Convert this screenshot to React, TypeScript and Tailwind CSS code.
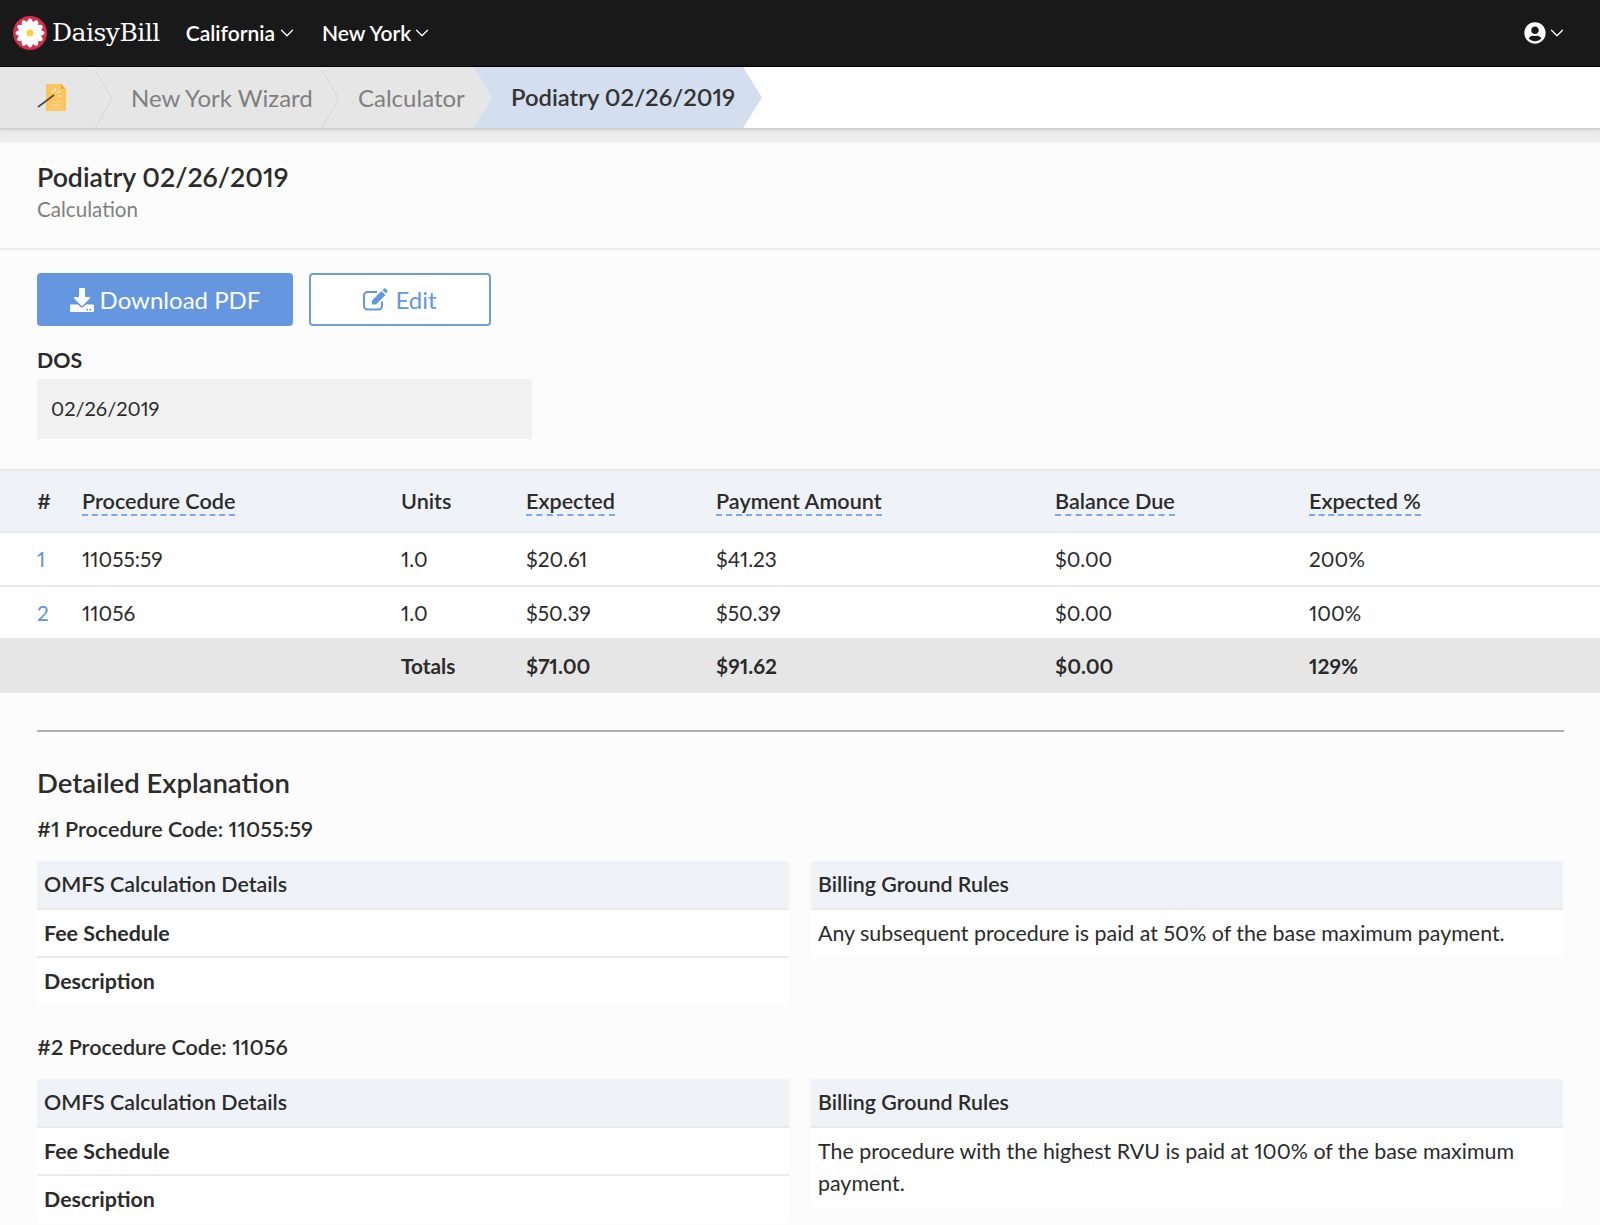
import { ChevronDown } from 'lucide-react'
import { FaDownload, FaUserCircle } from 'react-icons/fa'

const colClass = 'grid grid-cols-[45px_319px_125px_190px_339px_254px_1fr] items-center pl-[37px]'

const columns = [
  { label: '#', tip: false },
  { label: 'Procedure Code', tip: true },
  { label: 'Units', tip: false },
  { label: 'Expected', tip: true },
  { label: 'Payment Amount', tip: true },
  { label: 'Balance Due', tip: true },
  { label: 'Expected %', tip: true },
]

const rows = [
  ['1', '11055:59', '1.0', '$20.61', '$41.23', '$0.00', '200%'],
  ['2', '11056', '1.0', '$50.39', '$50.39', '$0.00', '100%'],
]

const totals = ['', '', 'Totals', '$71.00', '$91.62', '$0.00', '129%']

function DaisyLogo() {
  const petals = Array.from({ length: 12 }, (_, i) => i * 30)
  return (
    <svg width="34" height="34" viewBox="0 0 34 34" className="shrink-0">
      <circle cx="17" cy="17" r="17" fill="#d32f4f" />
      {petals.map((deg) => (
        <ellipse key={deg} cx="17" cy="9" rx="3.3" ry="6.5" fill="#fff" transform={`rotate(${deg} 17 17)`} />
      ))}
      <circle cx="17" cy="17" r="3.4" fill="#f7d23e" />
    </svg>
  )
}

function WizardIcon() {
  return (
    <svg width="34" height="30" viewBox="0 0 34 30">
      <path d="M11 6h19v21H11z" fill="#fce3a8" transform="rotate(6 20 16)" />
      <path d="M9 1h15l5 5v22H9z" fill="#fbc65f" />
      <path d="M24 1l5 5h-5z" fill="#e7ab42" />
      <path d="M15 22h9M15 25h9M15 19h9" stroke="#f3dca6" strokeWidth="0.8" />
      <path d="M1 24L17 12" stroke="#4b4b4b" strokeWidth="1.6" />
      <path d="M18 5v3M23 8l-3 2M24 13h-3M15 7l1 2" stroke="#fff" strokeWidth="1" />
    </svg>
  )
}

function EditIcon() {
  return (
    <svg width="25" height="24" viewBox="0 0 25 24" className="shrink-0" fill="none">
      <path d="M19 13.5V18a3.5 3.5 0 0 1-3.5 3.5h-11A3.5 3.5 0 0 1 1 18V7.5A3.5 3.5 0 0 1 4.500 4H14" stroke="currentColor" strokeWidth="2" />
      <path d="M9 12.500L18.500 3l4 4L13 16.500H9z" fill="currentColor" />
      <path d="M19.500 2L21 .5a1 1 0 0 1 1.400 0l2 2a1 1 0 0 1 0 1.400L23 5.500z" fill="currentColor" />
    </svg>
  )
}

function CrumbChevron() {
  return (
    <svg width="19" height="58" viewBox="0 0 19 58" className="absolute left-full top-[3px]" fill="none">
      <path d="M1 0l17 29L1 58" stroke="#d4d4d4" strokeWidth="1" />
    </svg>
  )
}

function TopNav() {
  return (
    <header className="flex h-[67px] items-center border-b border-black bg-[#191919] pl-[13px] pr-[32px] text-white">
      <DaisyLogo />
      <span className="ml-[5px] font-['DejaVu_Serif',serif] text-[25px] tracking-[-0.5px]">DaisyBill</span>
      <nav className="ml-[26px] flex items-center gap-[24px] text-[21px] font-semibold">
        <span className="flex items-center gap-[1px]">
          California <ChevronDown className="size-[22px]" strokeWidth={1.4} />
        </span>
        <span className="flex items-center">
          New York <ChevronDown className="size-[22px]" strokeWidth={1.4} />
        </span>
      </nav>
      <div className="ml-auto flex items-center">
        <FaUserCircle className="size-[22px]" />
        <ChevronDown className="size-[22px]" strokeWidth={1.4} />
      </div>
    </header>
  )
}

function Breadcrumbs() {
  return (
    <div className="relative flex h-[61px] bg-white text-[24px] shadow-[0_1px_3px_rgba(0,0,0,0.18)]">
      <div className="flex w-[492px] items-center bg-[#e6e6e6] text-[#808080] [clip-path:polygon(0_0,473px_0,100%_50%,473px_100%,0_100%)]">
        <div className="relative flex h-full w-[94px] items-center pl-[37px]">
          <WizardIcon />
          <CrumbChevron />
        </div>
        <div className="relative flex h-full w-[227px] items-center pl-[37px]">
          New York Wizard
          <CrumbChevron />
        </div>
        <div className="pl-[37px]">Calculator</div>
      </div>
      <div className="ml-[-19px] flex w-[289px] items-center bg-[#d3deee] pl-[38px] text-[23.800px] font-semibold text-[#333] [clip-path:polygon(0_0,calc(100%-19px)_0,100%_50%,calc(100%-19px)_100%,0_100%,19px_50%)]">
        Podiatry 02/26/2019
      </div>
    </div>
  )
}

function SummaryTable() {
  return (
    <section className="mt-[30px] border-t-2 border-[#e9e9e9]">
      <div className={`${colClass} h-[62px] border-b-2 border-[#e9e9e9] bg-[#eff2f7] text-[21.600px] font-semibold`}>
        {columns.map((col) => (
          <div key={col.label}>
            <span className={col.tip ? 'border-b-2 border-dashed border-[#7ea8e6]' : ''}>{col.label}</span>
          </div>
        ))}
      </div>
      {rows.map((row, r) => (
        <div
          key={row[0]}
          className={`${colClass} bg-white text-[20.800px] ${r === 0 ? 'h-[54px] border-b-2 border-[#e9e9e9]' : 'h-[51px]'}`}
        >
          {row.map((cell, i) => (
            <div key={i} className={i === 0 ? 'text-[#5e93de]' : ''}>
              {cell}
            </div>
          ))}
        </div>
      ))}
      <div className={`${colClass} h-[55px] bg-[#e6e6e6] text-[20.800px] font-bold`}>
        {totals.map((cell, i) => (
          <div key={i}>{cell}</div>
        ))}
      </div>
    </section>
  )
}

function DetailBlock({ title, rule }: { title: string; rule: string }) {
  return (
    <div>
      <h3 className="text-[21.500px] font-semibold leading-[26px]">{title}</h3>
      <div className="mt-[19px] grid grid-cols-[752px_752px] items-start gap-x-[22px]">
        <div className="bg-white">
          <div className="flex h-[49px] items-center border-b-2 border-[#e9e9e9] bg-[#eff2f7] px-[7px] font-semibold">
            OMFS Calculation Details
          </div>
          <div className="flex h-[48px] items-center border-b-2 border-[#e9e9e9] px-[7px] font-bold">
            Fee Schedule
          </div>
          <div className="flex h-[47px] items-center px-[7px] font-bold">Description</div>
        </div>
        <div className="bg-white">
          <div className="flex h-[49px] items-center border-b-2 border-[#e9e9e9] bg-[#eff2f7] px-[7px] font-semibold">
            Billing Ground Rules
          </div>
          <p className="px-[7px] pb-[8px] pt-[7px] leading-[32px]">{rule}</p>
        </div>
      </div>
    </div>
  )
}

export default function App() {
  return (
    <div className="h-[1225px] overflow-hidden bg-[#fcfcfc] font-['Lato',sans-serif] text-[21.400px] text-[#2b2b2b] proportional-nums">
      <TopNav />
      <Breadcrumbs />
      <div className="h-[15px] bg-gradient-to-b from-[#e6e6e6] to-[#f2f2f2]" />
      <div className="h-[107px] border-b-2 border-[#ebebeb] pl-[37px] pt-[18px]">
        <h1 className="text-[26.700px] font-semibold leading-[32px]">Podiatry 02/26/2019</h1>
        <p className="mt-[2px] text-[20.600px] leading-[28px] text-[#808080]">Calculation</p>
      </div>
      <div className="px-[37px] pt-[23px]">
        <div className="flex gap-[16px] text-[24px]">
          <button className="flex h-[53px] w-[256px] items-center justify-center gap-[6px] rounded-[4px] bg-[#6497e0] text-white">
            <FaDownload className="size-[24px]" /> Download PDF
          </button>
          <button className="flex h-[53px] w-[182px] items-center justify-center gap-[7px] rounded-[4px] border-2 border-[#6d9de2] bg-white text-[#6497e0]">
            <EditIcon /> Edit
          </button>
        </div>
        <label className="mt-[21px] block font-bold leading-[26px]">DOS</label>
        <div className="mt-[6px] flex h-[60px] w-[495px] items-center bg-[#f1f1f1] pb-[2px] pl-[14px] text-[20px]">02/26/2019</div>
      </div>
      <SummaryTable />
      <div className="pl-[37px] pr-[36px]">
        <hr className="mt-[37px] border-t-2 border-[#b0b0b0]" />
        <h2 className="mt-[35px] text-[27.500px] font-semibold leading-[32px]">Detailed Explanation</h2>
        <div className="mt-[17px] flex flex-col gap-[29px]">
          <DetailBlock title="#1 Procedure Code: 11055:59" rule="Any subsequent procedure is paid at 50% of the base maximum payment." />
          <DetailBlock
            title="#2 Procedure Code: 11056"
            rule="The procedure with the highest RVU is paid at 100% of the base maximum payment."
          />
        </div>
      </div>
    </div>
  )
}
